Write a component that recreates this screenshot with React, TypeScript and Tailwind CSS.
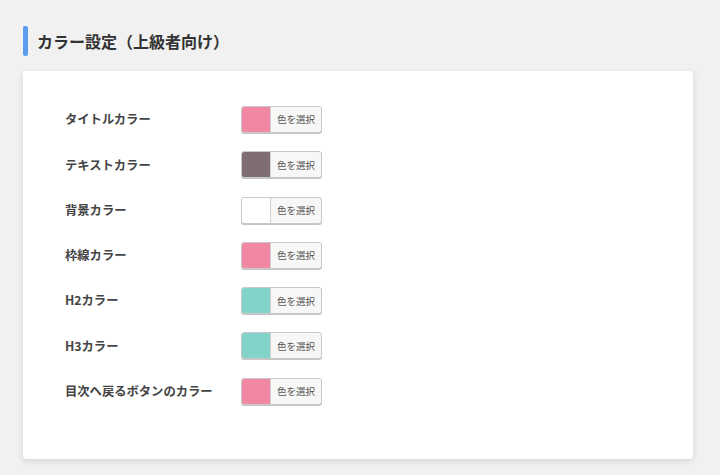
const rows = [
  { label: "タイトルカラー", color: "#f088a4" },
  { label: "テキストカラー", color: "#7f6d75" },
  { label: "背景カラー", color: "#ffffff" },
  { label: "枠線カラー", color: "#f088a4" },
  { label: "H2カラー", color: "#82d4cb" },
  { label: "H3カラー", color: "#82d4cb" },
  { label: "目次へ戻るボタンのカラー", color: "#f088a4" },
];

function ColorButton({ color }: { color: string }) {
  return (
    <button className="flex h-[27px] w-[81px] overflow-hidden rounded-[3px] border border-[#c8c8c8] bg-[#f7f7f7] shadow-[0_1px_0_#c4c4c4]">
      <span className="h-full w-[29px] border-r border-[#d0d0d0]" style={{ backgroundColor: color }} />
      <span className="flex flex-1 items-center justify-center text-[9.5px] text-[#555]">色を選択</span>
    </button>
  );
}

export default function App() {
  return (
    <div
      className="min-h-[475px] w-[720px] bg-[#f1f1f1] pl-[23px] pr-[27px] pt-[26px]"
      style={{ fontFamily: '"Noto Sans CJK JP", "Noto Sans", sans-serif' }}
    >
      <div className="flex h-[30px] items-center gap-[9px]">
        <div className="h-[30px] w-[5px] rounded-[2px] bg-[#5b9cf0]" />
        <h2 className="text-[16px] font-bold leading-none text-[#333]">カラー設定（上級者向け）</h2>
      </div>
      <div className="mt-[15px] h-[388px] rounded-[3px] bg-white pl-[42px] pt-[35px] shadow-[0_2px_6px_rgba(0,0,0,0.12)]">
        <div className="flex flex-col gap-[18.3px]">
          {rows.map((r) => (
            <div key={r.label} className="flex items-center">
              <div className="w-[176px] text-[12.3px] font-bold text-[#444]">{r.label}</div>
              <ColorButton color={r.color} />
            </div>
          ))}
        </div>
      </div>
    </div>
  );
}
